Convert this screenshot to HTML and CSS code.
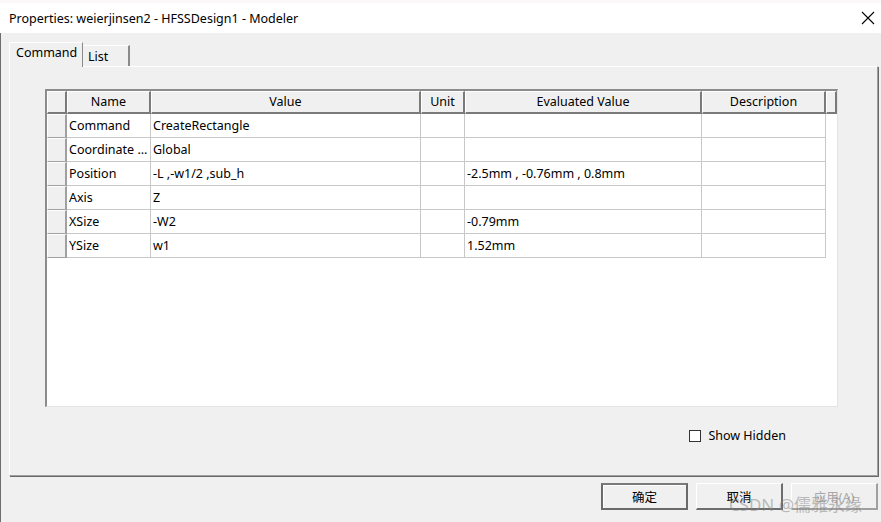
FILE: index.html
```html
<!DOCTYPE html>
<html>
<head>
<meta charset="utf-8">
<link rel="stylesheet" href="styles.css">
</head>
<body>
<div class="window">
  <div class="titlebar">
    <span class="title">Properties: weierjinsen2 - HFSSDesign1 - Modeler</span>
    <svg class="close" width="14" height="14" viewBox="0 0 14 14"><path d="M1 1L13 13M13 1L1 13" stroke="#000" stroke-width="1.1" fill="none"/></svg>
  </div>
  <div class="body">
    <div class="tabs">
      <div class="tab active">Command</div>
      <div class="tab">List</div>
    </div>
    <div class="panel">
      <div class="grid">
        <div class="row head">
          <div class="hc"></div>
          <div class="hc">Name</div>
          <div class="hc">Value</div>
          <div class="hc">Unit</div>
          <div class="hc">Evaluated Value</div>
          <div class="hc">Description</div>
          <div class="hc"></div>
        </div>
        <div class="row"><div class="sel"></div><div class="c">Command</div><div class="c">CreateRectangle</div><div class="c"></div><div class="c"></div><div class="c"></div></div>
        <div class="row"><div class="sel"></div><div class="c">Coordinate ...</div><div class="c">Global</div><div class="c"></div><div class="c"></div><div class="c"></div></div>
        <div class="row"><div class="sel"></div><div class="c">Position</div><div class="c">-L ,-w1/2 ,sub_h</div><div class="c"></div><div class="c">-2.5mm , -0.76mm , 0.8mm</div><div class="c"></div></div>
        <div class="row"><div class="sel"></div><div class="c">Axis</div><div class="c">Z</div><div class="c"></div><div class="c"></div><div class="c"></div></div>
        <div class="row"><div class="sel"></div><div class="c">XSize</div><div class="c">-W2</div><div class="c"></div><div class="c">-0.79mm</div><div class="c"></div></div>
        <div class="row"><div class="sel"></div><div class="c">YSize</div><div class="c">w1</div><div class="c"></div><div class="c">1.52mm</div><div class="c"></div></div>
      </div>
      <div class="options">
        <label class="check"><span class="box"></span>Show Hidden</label>
      </div>
    </div>
    <div class="buttons">
      <div class="btn default">确定</div>
      <div class="btn">取消</div>
      <div class="btn disabled">应用(A)</div>
      <div class="watermark">CSDN @儒雅永缘</div>
    </div>
  </div>
</div>
</body>
</html>
```

FILE: styles.css
```css
* { box-sizing: border-box; }
html, body { margin: 0; padding: 0; }
body {
  width: 881px;
  height: 522px;
  overflow: hidden;
  font-family: "Noto Sans", "Noto Sans CJK SC", sans-serif;
  font-size: 12.5px;
  color: #000;
  background: #f0f0f0;
}
.window {
  width: 881px;
  height: 522px;
  display: flex;
  flex-direction: column;
}
.titlebar {
  height: 33px;
  background: #fff;
  display: flex;
  align-items: center;
  justify-content: space-between;
  padding: 0 6px 0 9px;
  border-top: 3px solid #fbf8fa;
}
.title { font-size: 12.5px; color: #000; }
.body {
  flex: 1;
  background: #f0f0f0;
  border-left: 1px solid #6e6e6e;
  padding: 9px 3px 0 8px;
  display: flex;
  flex-direction: column;
}
.tabs {
  display: flex;
  align-items: flex-end;
  height: 24px;
  position: relative;
  z-index: 2;
}
.tab {
  height: 21px;
  width: 47px;
  padding: 2px 0 0 5px;
  border-top: 1px solid #fff;
  border-right: 2px solid #8a8a8a;
  background: #f0f0f0;
  line-height: 17px;
}
.tab.active {
  height: 25px;
  width: 74px;
  padding: 1px 0 0 6px;
  border-top: 1px solid #fff;
  border-left: 1px solid #fff;
  border-right: 1px solid #8a8a8a;
  margin-bottom: -1px;
}
.panel {
  height: 410px;
  border-top: 1px solid #fff;
  border-left: 1px solid #fff;
  border-right: 1px solid #a0a0a0;
  border-bottom: 1px solid #a0a0a0;
  box-shadow: 1px 1px 0 #696969;
  padding: 22px 0 0 35px;
  display: flex;
  flex-direction: column;
}
.grid {
  width: 793px;
  height: 318px;
  background: #fff;
  border-top: 2px solid #8c8c8c;
  border-left: 2px solid #8c8c8c;
  border-right: 1px solid #e3e3e3;
  border-bottom: 1px solid #e3e3e3;
  display: flex;
  flex-direction: column;
}
.row {
  display: grid;
  grid-template-columns: 20px 84px 270px 44px 237px 124px 11px;
  height: 24px;
}
.row.head { height: 23px; }
.hc {
  background: #f0f0f0;
  border-top: 1px solid #fff;
  border-left: 1px solid #fff;
  border-right: 2px solid #7a7a7a;
  border-bottom: 2px solid #7a7a7a;
  text-align: center;
  line-height: 19px;
}
.sel {
  background: #f0f0f0;
  border-top: 1px solid #fff;
  border-left: 1px solid #fff;
  border-right: 2px solid #a0a0a0;
  border-bottom: 1px solid #a0a0a0;
}
.c {
  border-right: 1px solid #c8c8c8;
  border-bottom: 1px solid #c8c8c8;
  padding-left: 2px;
  line-height: 23px;
  white-space: nowrap;
  overflow: hidden;
}
.options {
  display: flex;
  justify-content: flex-end;
  padding: 20px 91px 0 0;
}
.check {
  display: flex;
  align-items: center;
  gap: 7px;
}
.box {
  width: 12px;
  height: 12px;
  border: 1px solid #333;
  background: #fff;
}
.buttons {
  position: relative;
  display: flex;
  justify-content: flex-end;
  gap: 8px;
  padding: 7px 0 0 0;
}
.btn {
  width: 87px;
  height: 27px;
  display: flex;
  align-items: center;
  justify-content: center;
  background: #f0f0f0;
  border-top: 1px solid #fff;
  border-left: 1px solid #fff;
  border-right: 2px solid #6d6d6d;
  border-bottom: 2px solid #6d6d6d;
}
.btn.default {
  border: 2px solid #6a6a6a;
  border-top-color: #7a7a7a;
  box-shadow: inset 1px 1px 0 #fff;
}
.btn.disabled {
  color: #a8a8a8;
  border-right-color: #a0a0a0;
  border-bottom-color: #a0a0a0;
}
.watermark {
  position: absolute;
  right: 16px;
  top: 19px;
  font-size: 17px;
  line-height: 20px;
  color: rgba(130, 130, 130, 0.5);
  white-space: nowrap;
}
```
